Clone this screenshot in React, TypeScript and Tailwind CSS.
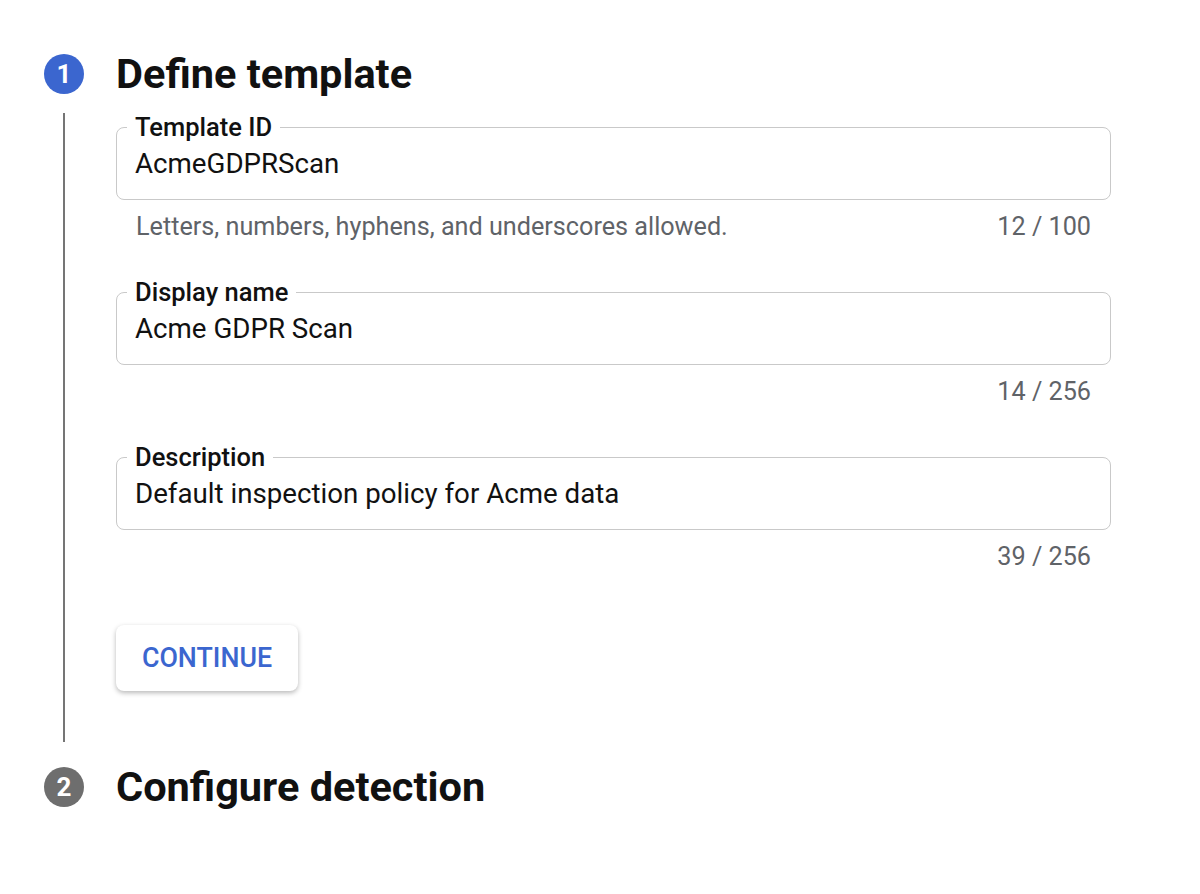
import React from 'react'

type Field = {
  label: string
  value: string
  hint?: string
  count: string
}

const fields: Field[] = [
  { label: 'Template ID', value: 'AcmeGDPRScan', hint: 'Letters, numbers, hyphens, and underscores allowed.', count: '12 / 100' },
  { label: 'Display name', value: 'Acme GDPR Scan', count: '14 / 256' },
  { label: 'Description', value: 'Default inspection policy for Acme data', count: '39 / 256' },
]

function StepBadge({ n, active }: { n: number; active?: boolean }) {
  return (
    <div
      className={`w-[40px] h-[40px] rounded-full flex items-center justify-center text-white text-[26px] font-bold shrink-0
        ${active ? 'bg-[#3b66cf]' : 'bg-[#6e6e6e]'}`}
    >
      {n}
    </div>
  )
}

function OutlinedField({ field }: { field: Field }) {
  return (
    <div className="mb-[37px]">
      <fieldset className="border-[1.5px] border-[#c9c9c9] rounded-[8px] px-[18px] pt-[8px] pb-[20px] m-0 min-w-0">
        <legend className="ml-[-8px] px-[8px] text-[25.5px] leading-[28px] font-medium text-[#111]">
          {field.label}
        </legend>
        <div className="text-[27.7px] leading-[30px] text-[#111]">{field.value}</div>
      </fieldset>
      <div className="mt-[13px] px-[20px] flex justify-between text-[25.2px] leading-[28px] text-[#5f6368]">
        <span>{field.hint}</span>
        <span>{field.count}</span>
      </div>
    </div>
  )
}

export default function App() {
  return (
    <div className="min-h-[894px] bg-white pl-[44px] pr-[89px] pt-[54px]" style={{ fontFamily: 'Roboto, "Liberation Sans", sans-serif' }}>

      {/* Step 1 */}
      <div className="flex items-center gap-[32px] h-[40px]">
        <StepBadge n={1} active />
        <h1 className="text-[41.5px] font-bold text-[#111] leading-none">Define template</h1>
      </div>

      <div className="flex gap-[32px] mt-[19px]">
        <div className="w-[40px] flex justify-center shrink-0">
          <div className="w-[2px] bg-[#757575]" />
        </div>

        <div className="flex-1 pb-[51px]">
          {fields.map(f => (
            <OutlinedField key={f.label} field={f} />
          ))}

          <button
            type="button"
            className="mt-[17px] w-[182px] h-[66px] rounded-[8px] bg-white text-[#3b66cf] text-[26.8px] font-medium shadow-[0_2px_5px_rgba(0,0,0,0.28)]"
          >
            CONTINUE
          </button>
        </div>
      </div>

      {/* Step 2 */}
      <div className="flex items-center gap-[32px] h-[40px] mt-[25px]">
        <StepBadge n={2} />
        <h2 className="text-[41.5px] font-bold text-[#111] leading-none">Configure detection</h2>
      </div>

    </div>
  )
}
